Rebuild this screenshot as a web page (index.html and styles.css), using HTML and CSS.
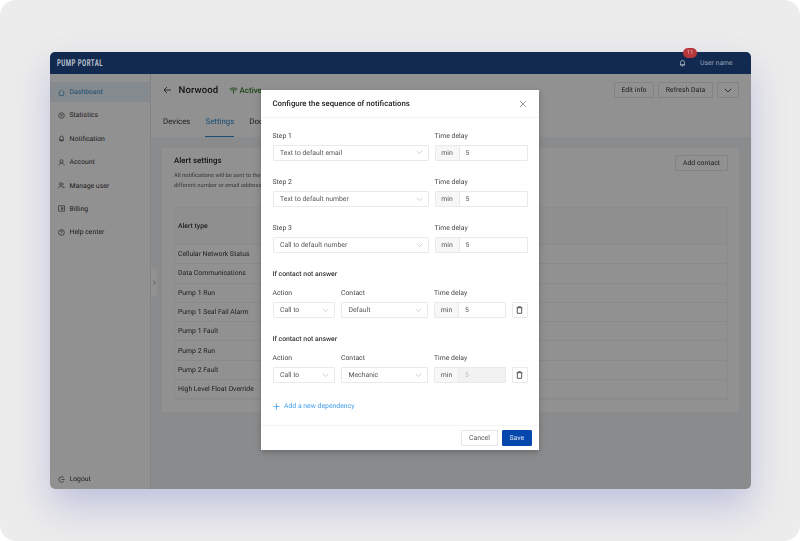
FILE: index.html
```html
<!DOCTYPE html>
<html lang="en">
<head>
	<meta charset="UTF-8">
	<title>Pump Portal</title>
	<link rel="stylesheet" href="styles.css">
</head>
<body>
	<div class="screen">
		<div class="app">
			<div class="topbar">
				<div class="logo">PUMP PORTAL</div>
				<div class="user">
					<span class="bell">
						<svg width="7" height="8" viewBox="0 0 9 10"><path d="M2 7.5V4.2a2.5 2.5 0 0 1 5 0v3.3zM1.2 7.5h6.6M3.7 9h1.6" fill="none" stroke="#c3cad6" stroke-width=".9"/></svg>
						<span class="badge">11</span>
					</span>
					<span class="user_name">User name</span>
				</div>
			</div>
			<div class="app_body">
				<div class="sidebar">
					<div class="nav">
						<div class="nav_item active"><svg class="ico" viewBox="0 0 8 8"><path d="M.6 4 4 1l3.4 3M1.5 3.4v4h5v-4" /></svg>Dashboard</div>
						<div class="nav_item"><svg class="ico" viewBox="0 0 8 8"><circle cx="4" cy="4" r="3.2"/><path d="M2.2 3.4h3.6M4 4v1.4"/></svg>Statistics</div>
						<div class="nav_item"><svg class="ico" viewBox="0 0 8 8"><path d="M2 6V3.2a2 2 0 0 1 4 0V6zM1.4 6h5.2M3.4 7.3h1.2"/></svg>Notification</div>
						<div class="nav_item"><svg class="ico" viewBox="0 0 8 8"><circle cx="4" cy="2.6" r="1.8"/><path d="M1 7.4C1.3 5.6 2.4 4.6 4 4.6s2.7 1 3 2.8"/></svg>Account</div>
						<div class="nav_item"><svg class="ico" viewBox="0 0 8 8"><circle cx="3.2" cy="2.2" r="1.5"/><path d="M.7 7.2c.2-1.6 1.2-2.6 2.5-2.6s2.3 1 2.5 2.6M5.2 1.2a1.4 1.4 0 0 1 0 2.4M6 4.8c.8.4 1.3 1.2 1.4 2"/></svg>Manage user</div>
						<div class="nav_item"><svg class="ico" viewBox="0 0 8 8"><rect x=".8" y="1" width="6.4" height="6"/><rect x="4" y="3.2" width="1.6" height="1.6"/></svg>Billing</div>
						<div class="nav_item"><svg class="ico" viewBox="0 0 8 8"><circle cx="4" cy="4" r="3.3"/><path d="M3 3.1c0-1.3 2-1.3 2 0 0 .8-1 .8-1 1.6M4 5.5v.6"/></svg>Help center</div>
					</div>
					<div class="nav_item logout"><svg class="ico" viewBox="0 0 8 8"><path d="M6.5 1.8a3.2 3.2 0 1 0 0 4.4M3.8 4h3.8"/></svg>Logout</div>
				</div>
				<div class="main">
					<div class="main_head">
						<div class="title_row">
							<svg class="back" width="9" height="8" viewBox="0 0 9 8"><path d="M8 4H1M4 1 1 4l3 3" fill="none" stroke="#2c2c2c" stroke-width=".8"/></svg>
							<span class="device_name">Norwood</span>
							<svg class="wifi" width="9" height="7" viewBox="0 0 10 8"><path d="M.5 2.6C3 .6 7 .6 9.5 2.6M2.2 4C3.8 2.9 6.2 2.9 7.8 4M5 7.5V4.2" fill="none" stroke="#2c7a24" stroke-width="1.1"/></svg>
							<span class="status">Active</span>
							<div class="head_btns">
								<span class="btn btn_edit">Edit info</span>
								<span class="btn btn_refresh">Refresh Data</span>
								<span class="btn btn_icon"><svg width="8" height="5" viewBox="0 0 8 5"><path d="M.8.8 4 4 7.2.8" fill="none" stroke="#333" stroke-width=".8"/></svg></span>
							</div>
						</div>
						<div class="tabs">
							<span class="tab">Devices</span>
							<span class="tab tab_on">Settings</span>
							<span class="tab">Documents</span>
						</div>
					</div>
					<div class="content">
						<div class="card">
							<div class="card_head">
								<div>
									<div class="card_title">Alert settings</div>
									<div class="card_desc">All notifications will be sent to the<br>different number or email address</div>
								</div>
								<span class="btn btn_add">Add contact</span>
							</div>
							<div class="table">
								<div class="table_head">Alert type</div>
								<div class="table_row">Cellular Network Status</div>
								<div class="table_row">Data Communications</div>
								<div class="table_row">Pump 1 Run</div>
								<div class="table_row">Pump 1 Seal Fail Alarm</div>
								<div class="table_row">Pump 1 Fault</div>
								<div class="table_row">Pump 2 Run</div>
								<div class="table_row">Pump 2 Fault</div>
								<div class="table_row">High Level Float Override</div>
							</div>
						</div>
					</div>
				</div>
			</div>
			<div class="handle"><svg width="3" height="5" viewBox="0 0 3 5"><path d="M.4.5 2.4 2.5.4 4.5" fill="none" stroke="#666" stroke-width=".6"/></svg></div>
			<div class="scrim"></div>
			<div class="modal_wrap">
				<div class="modal">
					<div class="modal_head">
						<span>Configure the sequence of notifications</span>
						<svg width="8" height="8" viewBox="0 0 8 8"><path d="M1 1l6 6M7 1 1 7" stroke="#777" stroke-width=".7"/></svg>
					</div>
					<div class="modal_body">
						<div class="row step">
							<div class="field grow"><label>Step 1</label><div class="select">Text to default email<svg class="arrow" viewBox="0 0 8 5"><path d="M.8.8 4 4 7.2.8"/></svg></div></div>
							<div class="field delay"><label>Time delay</label><div class="time"><span class="unit">min</span><span class="val">5</span></div></div>
						</div>
						<div class="row step">
							<div class="field grow"><label>Step 2</label><div class="select">Text to default number<svg class="arrow" viewBox="0 0 8 5"><path d="M.8.8 4 4 7.2.8"/></svg></div></div>
							<div class="field delay"><label>Time delay</label><div class="time"><span class="unit">min</span><span class="val">5</span></div></div>
						</div>
						<div class="row step">
							<div class="field grow"><label>Step 3</label><div class="select">Call to default number<svg class="arrow" viewBox="0 0 8 5"><path d="M.8.8 4 4 7.2.8"/></svg></div></div>
							<div class="field delay"><label>Time delay</label><div class="time"><span class="unit">min</span><span class="val">5</span></div></div>
						</div>

						<div class="sub_title first">If contact not answer</div>
						<div class="row">
							<div class="field action"><label>Action</label><div class="select">Call to<svg class="arrow" viewBox="0 0 8 5"><path d="M.8.8 4 4 7.2.8"/></svg></div></div>
							<div class="field grow"><label>Contact</label><div class="select">Default<svg class="arrow" viewBox="0 0 8 5"><path d="M.8.8 4 4 7.2.8"/></svg></div></div>
							<div class="field delay_short"><label>Time delay</label><div class="time"><span class="unit">min</span><span class="val">5</span></div></div>
							<div class="trash"><svg width="7" height="8" viewBox="0 0 7 8"><path d="M.6 1.7h5.8M2.4 1.5V.7h2.2v.8M1.3 1.7v5.6h4.4V1.7" fill="none" stroke="#333" stroke-width=".8"/></svg></div>
						</div>
						<div class="sub_title">If contact not answer</div>
						<div class="row">
							<div class="field action"><label>Action</label><div class="select">Call to<svg class="arrow" viewBox="0 0 8 5"><path d="M.8.8 4 4 7.2.8"/></svg></div></div>
							<div class="field grow"><label>Contact</label><div class="select">Mechanic<svg class="arrow" viewBox="0 0 8 5"><path d="M.8.8 4 4 7.2.8"/></svg></div></div>
							<div class="field delay_short"><label>Time delay</label><div class="time off"><span class="unit">min</span><span class="val">5</span></div></div>
							<div class="trash"><svg width="7" height="8" viewBox="0 0 7 8"><path d="M.6 1.7h5.8M2.4 1.5V.7h2.2v.8M1.3 1.7v5.6h4.4V1.7" fill="none" stroke="#333" stroke-width=".8"/></svg></div>
						</div>
						<div class="add_dep"><svg width="7" height="7" viewBox="0 0 7 7"><path d="M3.5.5v6M.5 3.5h6" stroke="#3f9bea" stroke-width=".8"/></svg>Add a new dependency</div>
					</div>
					<div class="modal_foot">
						<span class="foot_btn">Cancel</span>
						<span class="foot_btn save">Save</span>
					</div>
				</div>
			</div>
		</div>
	</div>
</body>
</html>
```

FILE: styles.css
```css
*{box-sizing: border-box;}
html,body{margin:0;height:100%;overflow: hidden;background:#fff;}
body{font-family:Roboto,"Liberation Sans",sans-serif;font-size:6.85px;color:#333;text-rendering:geometricPrecision;}
.screen{width:800px;height:541px;background:#ececec;border-radius:16px;padding:52px 49px 52px 50px;}
.app{position:relative;height:437px;border-radius:5px;display:flex;flex-direction:column;box-shadow:0 18px 36px rgba(90,100,190,.3);filter:blur(.3px);will-change:opacity;}
.topbar{height:22px;flex:none;background:#122a50;border-radius:5px 5px 0 0;display:flex;align-items:center;justify-content:space-between;padding:0 18px 0 7px;}
.logo{font-weight:bold;font-size:9.5px;letter-spacing:.75px;color:#bcc4d0;transform:scaleX(.63);transform-origin:left center;white-space:nowrap;}
.user{display:flex;align-items:center;}
.bell{position:relative;display:flex;margin-right:14px;}
.badge{position:absolute;left:4px;top:-11px;width:14px;height:10px;border-radius:5px;background:#b5373c;color:#e9a9a9;font-size:6px;line-height:10px;text-align:center;}
.user_name{color:#97a3b6;width:33px;white-space:nowrap;}
.app_body{flex:1;display:flex;min-height:0;background:#f3f5f6;border-radius:0 0 5px 5px;overflow:hidden;}
.sidebar{width:101px;flex:none;background:#fff;border-right:1px solid #e4e6e8;padding:8px 0 0;display:flex;flex-direction:column;justify-content:space-between;}
.nav_item{height:20px;margin-bottom:3.4px;padding-left:7.5px;display:flex;align-items:center;gap:5px;color:#333;}
.logout{margin-bottom:0;}
.nav_item.active{background:#e8f3f8;color:#2f8ad0;}
.nav_item.active .ico{stroke:#2f8ad0;}
.ico{width:7px;height:7px;fill:none;stroke:#333;stroke-width:.7;flex:none;}
.main{flex:1;min-width:0;}
.main_head{height:63px;background:#fff;padding:0 12px;}
.title_row{display:flex;align-items:center;height:32px;}
.back{margin-right:6.5px;}
.device_name{font-size:9.6px;font-weight:500;letter-spacing:.1px;margin-right:9px;color:#222;width:41px;white-space:nowrap;}
.wifi{margin-right:2px;}
.status{color:#2c7a24;font-weight:500;font-size:8px;}
.head_btns{margin-left:auto;display:flex;gap:4px;}
.btn{height:16px;border:1px solid #e6e6e6;border-radius:1px;background:#fff;display:inline-flex;align-items:center;justify-content:center;color:#333;}
.btn_edit{width:40px;}
.btn_refresh{width:55px;}
.btn_add{width:53px;}
.btn_icon{width:22px;}
.tabs{display:flex;gap:15px;height:31px;}
.tab{font-size:7.9px;color:#333;padding-top:11px;height:31px;}
.tab_on{color:#2f8ad0;border-bottom:1px solid #2f8ad0;}
.content{padding:11px 12px 0 11px;}
.card{height:264px;background:#fff;padding:7px 11px 7px 12px;}
.card_head{display:flex;justify-content:space-between;align-items:flex-start;height:52px;}
.card_title{font-size:7.9px;font-weight:500;color:#222;margin-top:1px;margin-bottom:6px;}
.card_desc{font-size:5.8px;line-height:10px;color:#666;}
.table{border:1px solid #f6f6f6;}
.table_head{height:37px;display:flex;align-items:center;padding-left:3px;background:#fcfcfc;font-weight:500;border-bottom:1px solid #f2f2f2;}
.table_row{height:19.3px;display:flex;align-items:center;padding-left:3px;border-bottom:1px solid #f2f2f2;}
.handle{position:absolute;left:101px;top:214px;width:6px;height:32px;background:#fff;clip-path:polygon(0 0,100% 4px,100% 28px,0 100%);display:flex;align-items:center;justify-content:center;}
.scrim{position:absolute;left:0;right:0;top:22px;bottom:0;background:rgba(0,0,0,.43);border-radius:0 0 5px 5px;}
.modal_wrap{position:absolute;inset:0;display:flex;align-items:center;justify-content:center;}
.modal{width:278px;height:360px;margin:-1px 0 0 -1px;background:#fff;box-shadow:0 2px 6px rgba(0,0,0,.25);display:flex;flex-direction:column;}
.modal_head{height:28px;flex:none;border-bottom:1px solid #f3f3f3;display:flex;align-items:center;justify-content:space-between;padding:0 12px 0 11.5px;font-size:7.8px;font-weight:500;color:#222;}
.modal_body{flex:1;padding:12.5px 11.5px 0;}
.row{display:flex;gap:6px;align-items:flex-end;}
.step{margin-bottom:16.3px;}
.field{display:flex;flex-direction:column;}
.field label{height:10px;line-height:10px;margin-bottom:4px;color:#444;}
.grow{flex:1;min-width:0;}
.delay{width:93px;}
.action{width:62.5px;}
.delay_short{width:72px;}
.select{height:16px;border:1px solid #eaeaea;border-radius:1px;display:flex;align-items:center;justify-content:space-between;padding:0 5px 0 6.5px;color:#555;}
.arrow{width:7px;height:4.5px;fill:none;stroke:#b5b5b5;stroke-width:.7;}
.time{height:16px;border:1px solid #eaeaea;border-radius:1px;display:flex;align-items:center;}
.unit{width:24px;height:100%;background:#f7f7f7;border-right:1px solid #eaeaea;display:flex;align-items:center;justify-content:center;color:#555;}
.val{padding-left:6px;color:#555;}
.time.off{background:#f2f2f2;}
.time.off .val{color:#bbb;}
.trash{width:15.5px;height:16px;border:1px solid #eaeaea;border-radius:1px;display:flex;align-items:center;justify-content:center;}
.sub_title{font-weight:500;color:#333;height:10px;line-height:10px;margin:16px 0 9px;}
.sub_title.first{margin-top:-.5px;}
.add_dep{display:flex;align-items:center;gap:4.5px;color:#3f9bea;margin-top:18.5px;height:10px;}
.modal_foot{height:25px;flex:none;border-top:1px solid #f3f3f3;display:flex;justify-content:flex-end;gap:3.5px;padding:4px 7px 0 0;}
.foot_btn{width:37px;height:16px;border:1px solid #e6e6e6;border-radius:1px;display:flex;align-items:center;justify-content:center;color:#555;}
.foot_btn.save{width:30.5px;background:#0548ad;border-color:#0548ad;color:#dfe8f5;}
```
